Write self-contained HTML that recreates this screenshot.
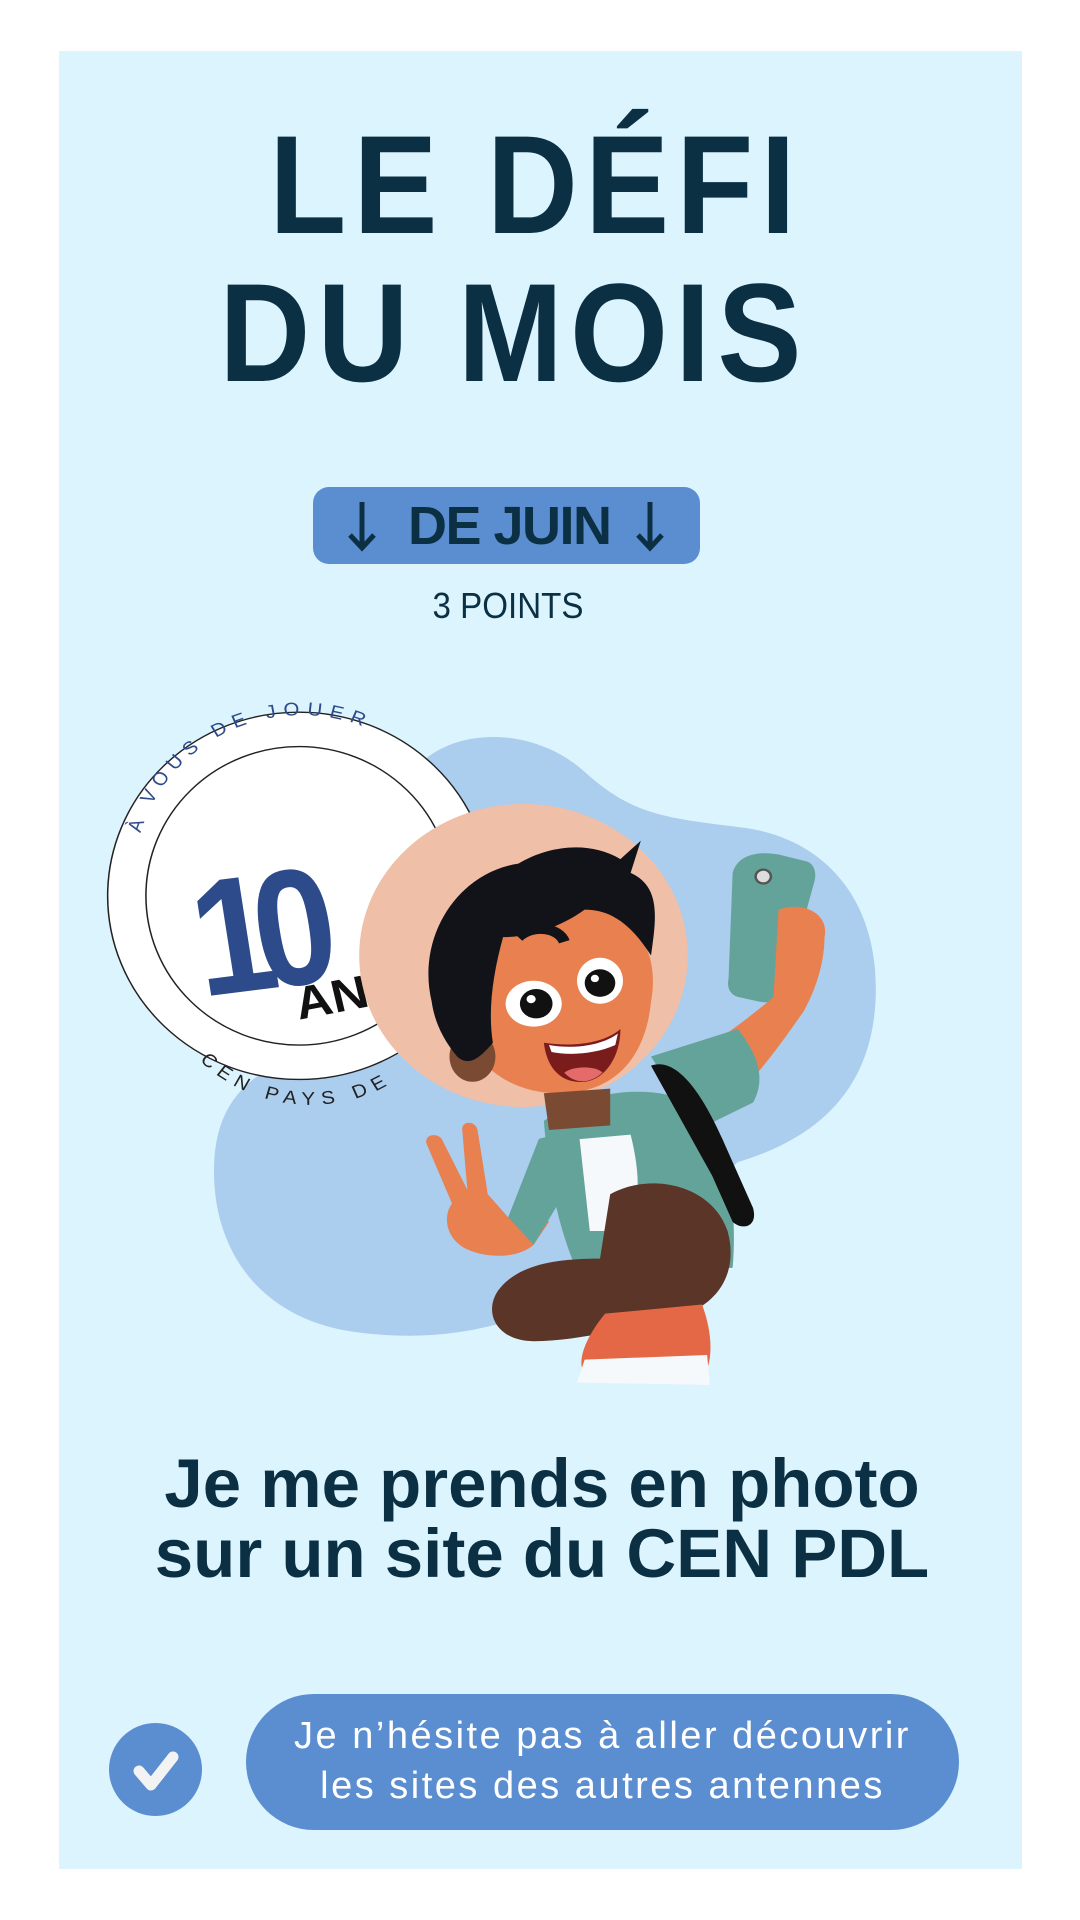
<!DOCTYPE html>
<html><head><meta charset="utf-8"><style>
html,body{margin:0;padding:0;}
body{width:1080px;height:1920px;background:#fff;position:relative;overflow:hidden;font-family:"Liberation Sans",sans-serif;}
.card{position:absolute;left:59px;top:51px;width:963px;height:1818px;background:#dcf4fe;}
.t{position:absolute;color:#0b3043;font-weight:bold;white-space:nowrap;}
.big{transform-origin:50% 50%;transform:scaleX(0.9);}
</style></head><body>
<div class="card"></div>
<div class="t big" style="left:0;width:1072px;text-align:center;top:100px;font-size:140px;line-height:170px;letter-spacing:8px;">LE DÉFI</div>
<div class="t big" style="left:0;width:1028px;text-align:center;top:248px;font-size:140px;line-height:170px;letter-spacing:8px;">DU MOIS</div>
<div style="position:absolute;left:313px;top:487px;width:387px;height:77px;background:#5b8ed1;border-radius:16px;"></div>
<svg style="position:absolute;left:340px;top:490px" width="370" height="72" viewBox="0 0 370 72">
<path d="M22 12 V58 M10 45 L22 58 L34 45" stroke="#0b3043" stroke-width="5" fill="none"/>
<path d="M310 12 V58 M298 45 L310 58 L322 45" stroke="#0b3043" stroke-width="5" fill="none"/>
</svg>
<div class="t" style="left:408px;top:496px;font-size:54px;line-height:60px;letter-spacing:-1.5px;">DE JUIN</div>
<div class="t" style="left:0;width:1016px;text-align:center;top:586px;font-size:36px;font-weight:normal;line-height:40px;transform:scaleX(0.92);">3 POINTS</div>

<svg style="position:absolute;left:100px;top:680px" width="800" height="720" viewBox="0 0 1568 1568" preserveAspectRatio="none">
<defs>
<path id="arcTop" d="M90 560 A 320 345 0 0 1 700 300"/>
<path id="arcBot" d="M120 700 A 310 335 0 0 0 690 740"/>
</defs>
<path d="M640 170 C720 100 860 110 950 200 C1040 290 1100 300 1250 320 C1420 340 1530 480 1520 700 C1510 900 1400 1000 1250 1050 L1100 1200 C900 1400 700 1450 500 1420 C300 1390 210 1220 225 1030 C240 880 330 850 400 800 Z" fill="#abcdee"/>
<ellipse cx="390" cy="470" rx="375" ry="400" fill="#fff" stroke="#222" stroke-width="3"/>
<ellipse cx="390" cy="470" rx="300" ry="325" fill="none" stroke="#222" stroke-width="3"/>
<text font-size="40" fill="#2d4a8a" font-family="Liberation Sans" letter-spacing="14"><textPath href="#arcTop" startOffset="230">À VOUS DE JOUER</textPath></text>
<text font-size="40" fill="#222" font-family="Liberation Sans" letter-spacing="14"><textPath href="#arcBot" startOffset="150">CEN PAYS DE</textPath></text>
<text x="200" y="690" font-size="360" font-weight="bold" fill="#2d4a8a" font-family="Liberation Sans" letter-spacing="-50" transform="rotate(-8 200 690) scale(0.8 1) translate(50 0)">10</text>
<text x="390" y="740" font-size="100" font-weight="bold" fill="#111" font-family="Liberation Sans" transform="rotate(-12 390 740)">ANS</text>
<ellipse cx="830" cy="600" rx="322" ry="330" fill="#efbfa8"/>
<path d="M1240 420 C1250 380 1290 372 1330 380 L1385 395 C1400 400 1405 420 1400 440 L1340 680 C1332 700 1310 705 1290 700 L1250 690 C1235 685 1228 670 1232 650 Z" fill="#64a39a"/>
<circle cx="1300" cy="428" r="15" fill="#ddd" stroke="#555" stroke-width="5"/>
<path d="M1330 500 C1380 480 1430 510 1420 560 C1420 620 1400 680 1380 720 C1330 800 1290 860 1250 900 L1160 820 C1220 780 1290 720 1320 690 Z" fill="#e8804f"/>
<path d="M1080 820 L1250 760 C1300 830 1300 880 1280 920 L1170 980 Z" fill="#64a39a"/>
<path d="M870 960 C960 890 1080 880 1160 920 C1230 980 1250 1150 1240 1280 L940 1300 C900 1200 880 1100 870 960 Z" fill="#64a39a"/>
<path d="M940 1000 L1040 990 C1060 1080 1060 1150 1030 1200 L960 1200 Z" fill="#f5f9fb"/>
<path d="M1080 840 C1130 820 1180 900 1220 1000 L1280 1150 C1290 1190 1260 1200 1240 1180 L1200 1080 Z" fill="#111"/>
<path d="M1000 1120 C1080 1070 1200 1100 1230 1200 C1250 1280 1220 1350 1150 1380 L1000 1420 C950 1430 900 1440 850 1440 C780 1440 750 1380 780 1330 C820 1270 900 1260 980 1260 Z" fill="#5a3528"/>
<path d="M990 1380 L1180 1360 C1200 1420 1200 1470 1190 1500 L950 1510 C930 1480 960 1420 990 1380 Z" fill="#e56846"/>
<path d="M950 1480 L1190 1470 L1195 1535 L935 1530 Z" fill="#f5f9fb"/>
<path d="M800 1170 C830 1150 860 1150 880 1180 L850 1230 C820 1260 760 1260 720 1240 C680 1220 670 1170 690 1140 L640 1010 C635 990 660 985 670 1000 L720 1110 L710 980 C708 960 735 958 740 980 L760 1120 Z" fill="#e8804f"/>
<path d="M860 1000 C900 980 940 1020 920 1100 L850 1230 L800 1170 Z" fill="#64a39a"/>
<path d="M700 700 C690 560 780 480 900 480 C1040 480 1100 580 1080 700 C1070 820 1010 900 900 900 C790 900 710 820 700 700 Z" fill="#e8804f"/>
<ellipse cx="730" cy="820" rx="45" ry="55" fill="#7a4a32"/>
<path d="M870 900 L1000 890 L1000 970 L880 980 Z" fill="#7a4a32"/>
<path d="M650 700 C620 560 700 420 820 400 C880 360 960 350 1020 390 L1060 350 L1040 420 C1100 450 1090 520 1080 600 C1040 530 1000 500 950 500 C900 540 840 560 790 560 C770 640 760 720 770 790 C740 830 720 840 700 820 C670 780 655 740 650 700 Z" fill="#111318"/>
<path d="M820 560 C850 530 900 540 910 570" stroke="#111318" stroke-width="22" fill="none"/>
<ellipse cx="850" cy="705" rx="55" ry="50" fill="#fff"/><circle cx="855" cy="705" r="32" fill="#111"/><circle cx="845" cy="695" r="9" fill="#fff"/>
<ellipse cx="980" cy="655" rx="45" ry="50" fill="#fff"/><circle cx="980" cy="660" r="30" fill="#111"/><circle cx="970" cy="650" r="8" fill="#fff"/>
<path d="M870 790 C930 800 990 790 1020 760 C1020 820 990 870 950 875 C900 880 875 840 870 790 Z" fill="#7a1c1c"/>
<path d="M880 795 C930 805 985 795 1015 770 L1010 795 C970 815 920 818 885 810 Z" fill="#fff"/>
<path d="M910 855 C930 840 970 840 985 855 C960 880 930 880 910 855 Z" fill="#e56b6b"/>
</svg>

<div class="t" style="left:0;width:1084px;text-align:center;top:1449px;font-size:69px;line-height:70px;letter-spacing:0;">Je me prends en photo<br>sur un site du CEN PDL</div>
<div style="position:absolute;left:109px;top:1723px;width:93px;height:93px;border-radius:50%;background:#5b8ed1;"></div>
<svg style="position:absolute;left:109px;top:1723px" width="93" height="93" viewBox="0 0 93 93"><path d="M30 48 L42 62 L64 34" stroke="#f3f3f3" stroke-width="11" fill="none" stroke-linecap="round" stroke-linejoin="round"/></svg>
<div style="position:absolute;left:246px;top:1694px;width:713px;height:136px;border-radius:68px;background:#5b8ed1;color:#fff;text-align:center;font-size:38px;line-height:50px;letter-spacing:2.5px;box-sizing:border-box;padding-top:17px;">Je n’hésite pas à aller découvrir<br>les sites des autres antennes</div>
</body></html>
